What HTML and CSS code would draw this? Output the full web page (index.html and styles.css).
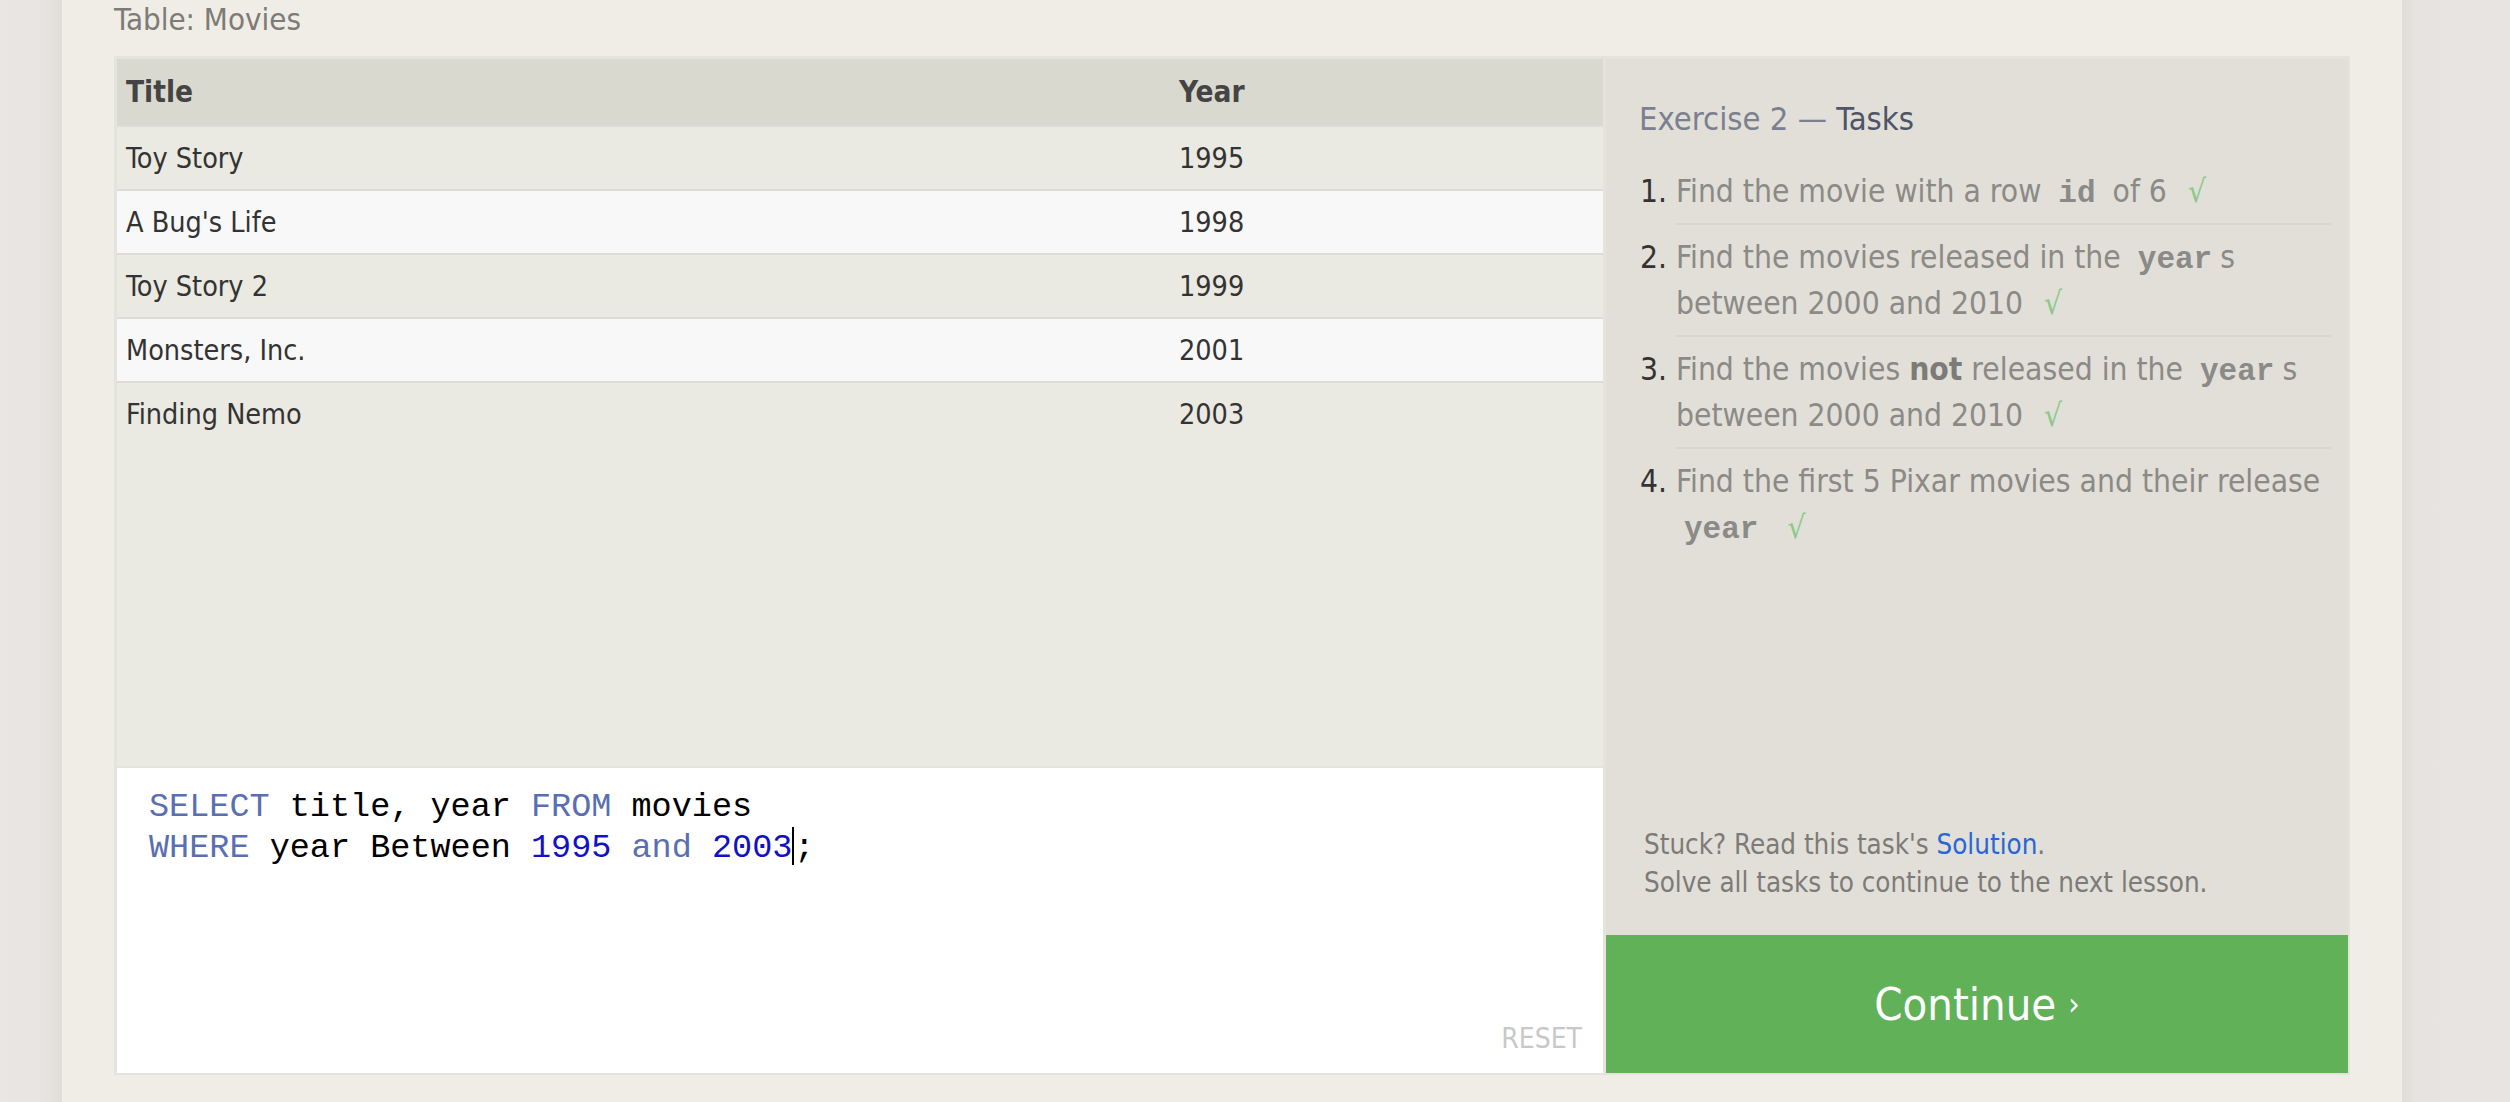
FILE: index.html
```html
<!DOCTYPE html>
<html>
<head>
<meta charset="utf-8">
<link rel="stylesheet" href="styles.css">
</head>
<body>
<div class="page">
  <div class="gutter-left"></div>
  <main class="main">
    <div class="table-label">Table: Movies</div>
    <div class="exercise">
      <div class="left-col">
        <div class="table-wrap">
          <div class="trow thead">
            <div class="c1">Title</div><div class="c2">Year</div>
          </div>
          <div class="trow odd"><div class="c1">Toy Story</div><div class="c2">1995</div></div>
          <div class="trow even"><div class="c1">A Bug's Life</div><div class="c2">1998</div></div>
          <div class="trow odd"><div class="c1">Toy Story 2</div><div class="c2">1999</div></div>
          <div class="trow even"><div class="c1">Monsters, Inc.</div><div class="c2">2001</div></div>
          <div class="trow odd"><div class="c1">Finding Nemo</div><div class="c2">2003</div></div>
        </div>
        <div class="editor">
          <div class="code"><span class="kw">SELECT</span> title, year <span class="kw">FROM</span> movies<br><span class="kw">WHERE</span> year Between <span class="num">1995</span> <span class="kw">and</span> <span class="num">2003</span><span class="cursor"></span>;</div>
          <div class="reset">RESET</div>
        </div>
      </div>
      <div class="right-col">
        <div class="tasks">
          <h2 class="tasks-title">Exercise 2 — <span class="dark">Tasks</span></h2>
          <ol class="task-list">
            <li>Find the movie with a row <code>id</code> of 6 <span class="check">√</span></li>
            <li>Find the movies released in the <code>year</code>s between 2000 and 2010 <span class="check">√</span></li>
            <li>Find the movies <b>not</b> released in the <code>year</code>s between 2000 and 2010 <span class="check">√</span></li>
            <li>Find the first 5 Pixar movies and their release <code>year</code> <span class="check">√</span></li>
          </ol>
          <div class="spacer"></div>
          <div class="help">
            <div>Stuck? Read this task's <a class="sol">Solution</a>.</div>
            <div>Solve all tasks to continue to the next lesson.</div>
          </div>
        </div>
        <div class="continue">Continue <span class="arrow">›</span></div>
      </div>
    </div>
  </main>
  <div class="gutter-right"></div>
</div>
</body>
</html>
```

FILE: styles.css
```css
html, body {
  margin: 0;
  padding: 0;
  height: 100%;
}
body {
  background: #e7e4e1;
  font-family: "DejaVu Sans Condensed", "DejaVu Sans", sans-serif;
  font-stretch: condensed;
  overflow: hidden;
}
.page {
  display: flex;
  height: 1102px;
}
.gutter-left {
  width: 62px;
  flex: none;
  background: linear-gradient(to right, #e9e6e3 0, #e8e5e2 38px, #e0ddd9 62px);
}
.gutter-right {
  flex: 1;
  background: linear-gradient(to right, #dfdcd9 0, #e6e3e0 16px, #e7e4e1 100%);
}
.main {
  width: 2236px;
  flex: none;
  background: #efede6;
  padding: 0 52px;
}
.table-label {
  height: 56px;
  font-size: 31px;
  line-height: 40px;
  color: #7d7b77;
  margin-top: -1px;
  margin-bottom: 1px;
}
.exercise {
  display: flex;
  border-style: solid;
  border-color: #e4e3dc;
  border-width: 3px 2px 2px 3px;
  width: 2231px;
}
.left-col {
  width: 1486px;
  display: flex;
  flex-direction: column;
}
.table-wrap {
  height: 707px;
  background: #eae9e2;
  border-bottom: 2px solid #e4e3dc;
}
.trow {
  display: flex;
  align-items: center;
  font-size: 28.5px;
  color: #333;
  border-top: 2px solid #dddcd7;
  box-sizing: border-box;
  height: 64px;
}
.thead {
  height: 66px;
  border-top: none;
  background: #dad9d0;
  font-weight: bold;
  color: #444;
  font-size: 29.5px;
}
.odd { background: #eae9e2; }
.even { background: #f8f8f8; }
.c1 {
  width: 1053px;
  padding-left: 9px;
}
.c2 {
  flex: 1;
}
.editor {
  height: 305px;
  background: #fff;
  display: flex;
  flex-direction: column;
  justify-content: space-between;
}
.code {
  font-family: "Liberation Mono", monospace;
  font-size: 33.5px;
  line-height: 39px;
  color: #000;
  padding: 20px 0 0 32px;
}
.kw { color: #5a6fb3; }
.num { color: #1111c8; }
.cursor {
  display: inline-block;
  width: 2px;
  height: 38px;
  background: #000;
  vertical-align: -8px;
}
.reset {
  align-self: flex-end;
  font-size: 28px;
  color: #c8c8c8;
  padding: 0 21px 18px 0;
}
.right-col {
  width: 742px;
  display: flex;
  flex-direction: column;
  border-left: 3px solid #e4e3dc;
}
.tasks {
  height: 876px;
  box-sizing: border-box;
  background: #e1dfd8;
  padding: 39px 17px 34px 33px;
  display: flex;
  flex-direction: column;
}
.tasks-title {
  margin: 0 0 19px 0;
  font-weight: normal;
  font-size: 32.5px;
  line-height: 42px;
  color: #7a808f;
}
.dark { color: #4e5566; }
.task-list {
  margin: 0;
  padding: 0 0 0 37px;
  font-size: 31.5px;
  line-height: 46px;
  color: #8b8a86;
}
.task-list li {
  padding: 9px 0 9px 0;
  border-bottom: 2px solid #d9d8cd;
}
.task-list li:last-child {
  border-bottom: none;
}
.task-list li::marker {
  color: #333;
}
.task-list code {
  font-family: "Liberation Mono", monospace;
  font-weight: bold;
  font-size: 31px;
  line-height: 1;
  color: #8a8a88;
  padding: 0 8px;
}
.task-list b {
  color: #7c7b77;
}
.check {
  color: #8cc88a;
  margin-left: 12px;
  line-height: 1;
}
.spacer { flex: 1; }
.help {
  font-size: 27.5px;
  line-height: 38px;
  color: #7c7b78;
  padding-left: 5px;
}
.sol {
  color: #2766d6;
}
.continue {
  height: 138px;
  background: #60b158;
  color: #fff;
  font-size: 45px;
  display: flex;
  align-items: center;
  justify-content: center;
}
.arrow {
  font-size: 32px;
  margin-left: 12px;
}
```
